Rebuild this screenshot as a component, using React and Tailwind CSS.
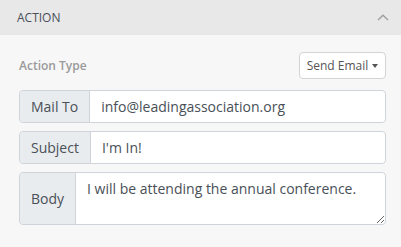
import React from "react";

function Row({ label, children, tall }) {
  return (
    <div className={`flex rounded border border-[#ced4da] ${tall ? "h-[53px]" : "h-[33px]"}`}>
      <div className="flex items-center px-[11px] bg-[#e9ecef] border-r border-[#ced4da] rounded-l text-[14px] text-[#495057]">
        {label}
      </div>
      {children}
    </div>
  );
}

export default function App() {
  return (
    <div className="w-[401px] h-[247px] bg-[#f7f7f7] font-['Open_Sans',sans-serif]">
      <div className="h-[35px] bg-[#e8e8e8] flex items-center justify-between pl-[17px] pr-[12px]">
        <span className="text-[12px] font-medium text-[#4a4f5a]">ACTION</span>
        <svg width="12" height="7" viewBox="0 0 12 7" fill="none">
          <path d="M1 6L6 1.2L11 6" stroke="#a0a0a0" strokeWidth="1.4" />
        </svg>
      </div>
      <div className="pl-[19px] pr-[15px]">
        <div className="flex items-center justify-between pt-[17px] pb-[11px]">
          <span className="text-[12px] font-semibold text-[#9a9a9a]">Action Type</span>
          <button className="h-[27px] w-[87px] flex items-center justify-center gap-[4px] bg-white border border-[#d4d4d4] rounded text-[12px] text-[#555]">
            Send Email
            <span className="w-0 h-0 border-l-[3px] border-r-[3px] border-t-[4px] border-l-transparent border-r-transparent border-t-[#555]" />
          </button>
        </div>
        <div className="flex flex-col gap-[8px]">
          <Row label="Mail To">
            <div className="flex-1 bg-white rounded-r flex items-center px-[11px] text-[14px] text-[#495057]">
              info@leadingassociation.org
            </div>
          </Row>
          <Row label="Subject">
            <div className="flex-1 bg-white rounded-r flex items-center px-[11px] text-[14px] text-[#495057]">
              I'm In!
            </div>
          </Row>
          <Row label="Body" tall>
            <textarea
              className="flex-1 bg-white rounded-r px-[11px] pt-[5px] text-[14px] text-[#495057] outline-none"
              defaultValue="I will be attending the annual conference."
            />
          </Row>
        </div>
      </div>
    </div>
  );
}
